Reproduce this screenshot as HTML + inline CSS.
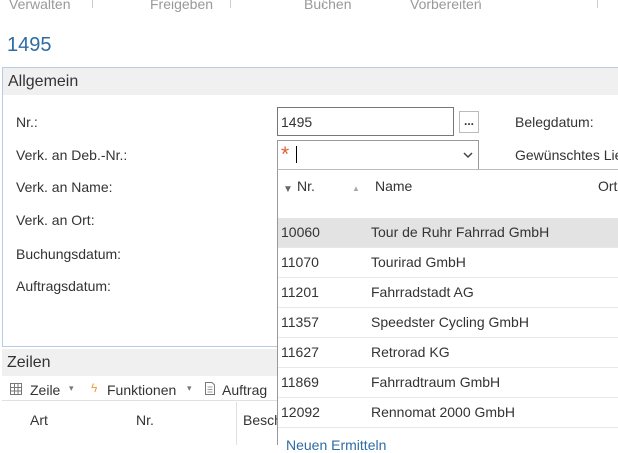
<!DOCTYPE html>
<html><head><meta charset="utf-8"><style>
*{margin:0;padding:0;box-sizing:border-box}
body{width:618px;height:445px;overflow:hidden;background:#fff;font-family:"Liberation Sans",sans-serif;color:#333;position:relative;font-size:14px}
.a{position:absolute;white-space:nowrap}
.tab{color:#999;font-size:14px;top:-4px}
.sep{position:absolute;top:0;width:1px;height:8px;background:#ccc}
.lbl{left:16px;color:#333}
.row{position:absolute;left:278px;width:340px;height:30px;border-bottom:1px solid #e8e8e8}
.row span{position:absolute;top:6px}
</style></head><body>
<div class="a tab" style="left:9px">Verwalten</div>
<div class="sep" style="left:92px"></div>
<div class="a tab" style="left:150px">Freigeben</div>
<div class="sep" style="left:230px"></div>
<div class="a tab" style="left:304px">Buchen</div>
<div class="sep" style="left:323px"></div>
<div class="a tab" style="left:410px">Vorbereiten</div>
<div class="sep" style="left:479px"></div>
<div class="sep" style="left:597px"></div>
<div class="a" style="left:7px;top:34px;font-size:20px;color:#2e6ca4">1495</div>

<div style="position:absolute;left:2px;top:67px;width:640px;height:280px;border:1px solid #b7cde3"></div>
<div style="position:absolute;left:3px;top:68px;width:620px;height:27px;background:#f0f0f0"></div>
<div class="a" style="left:8px;top:73px;font-size:16px;color:#333">Allgemein</div>

<div class="a lbl" style="top:114px">Nr.:</div>
<div class="a lbl" style="top:147px">Verk. an Deb.-Nr.:</div>
<div class="a lbl" style="top:179px">Verk. an Name:</div>
<div class="a lbl" style="top:212px">Verk. an Ort:</div>
<div class="a lbl" style="top:246px">Buchungsdatum:</div>
<div class="a lbl" style="top:278px">Auftragsdatum:</div>

<div style="position:absolute;left:277px;top:107px;width:177px;height:29px;border:1px solid #777"></div>
<div class="a" style="left:281px;top:114px">1495</div>
<div style="position:absolute;left:459px;top:111px;width:20px;height:22px;border:1px solid #bbb;font-size:12px;text-align:center;line-height:18px;font-weight:bold">...</div>
<div class="a" style="left:515px;top:114px">Belegdatum:</div>

<div style="position:absolute;left:277px;top:140px;width:202px;height:30px;border:1px solid #999"></div>
<div class="a" style="left:281px;top:143px;color:#e06030;font-size:21px">*</div>
<div style="position:absolute;left:296px;top:146px;width:1px;height:17px;background:#000"></div>
<svg class="a" style="left:463px;top:151px" width="10" height="8"><path d="M1 2 L5 6 L9 2" stroke="#444" stroke-width="1.5" fill="none"/></svg>
<div class="a" style="left:515px;top:147px">Gewünschtes Lie</div>

<div style="position:absolute;left:2px;top:349px;width:276px;height:27px;background:#f0f0f0"></div>
<div class="a" style="left:7px;top:354px;font-size:16px">Zeilen</div>
<div style="position:absolute;left:2px;top:400px;width:276px;height:1px;background:#e0e0e0"></div>
<svg class="a" style="left:10px;top:383px" width="12" height="12"><rect x=".5" y=".5" width="11" height="11" fill="none" stroke="#777"/><path d="M.5 4.5H11.5M.5 8H11.5M4.5 .5V11.5M8 .5V11.5" stroke="#777"/></svg>
<div class="a" style="left:30px;top:382px">Zeile</div>
<div class="a" style="left:69px;top:383px;font-size:9px;color:#777">▾</div>
<div class="a" style="left:91px;top:381px;color:#f0a040;font-size:12px">ϟ</div>
<div class="a" style="left:107px;top:382px">Funktionen</div>
<div class="a" style="left:187px;top:383px;font-size:9px;color:#777">▾</div>
<svg class="a" style="left:205px;top:382px" width="10" height="13"><path d="M.5 .5H7L9.5 3V12.5H.5Z" fill="none" stroke="#777"/><path d="M2.5 5H7.5M2.5 7.5H7.5M2.5 10H7.5" stroke="#999"/></svg>
<div class="a" style="left:222px;top:382px">Auftrag</div>
<div class="a" style="left:30px;top:412px">Art</div>
<div class="a" style="left:136px;top:412px">Nr.</div>
<div style="position:absolute;left:236px;top:402px;width:1px;height:43px;background:#e0e0e0"></div>
<div class="a" style="left:243px;top:412px">Besch</div>

<div style="position:absolute;left:277px;top:169px;width:341px;height:276px;background:#fff;border-left:1px solid #999;border-top:1px solid #bbb"></div>
<div class="a" style="left:283px;top:184px;font-size:10px;color:#666">▼</div>
<div class="a" style="left:297px;top:178px">Nr.</div>
<div class="a" style="left:352px;top:184px;font-size:8px;color:#aaa">▲</div>
<div class="a" style="left:375px;top:178px">Name</div>
<div class="a" style="left:598px;top:178px">Ort</div>
<div class="row" style="top:218px;background:#e3e3e3"><span style="left:3px">10060</span><span style="left:93px">Tour de Ruhr Fahrrad GmbH</span></div>
<div class="row" style="top:248px"><span style="left:3px">11070</span><span style="left:93px">Tourirad GmbH</span></div>
<div class="row" style="top:278px"><span style="left:3px">11201</span><span style="left:93px">Fahrradstadt AG</span></div>
<div class="row" style="top:308px"><span style="left:3px">11357</span><span style="left:93px">Speedster Cycling GmbH</span></div>
<div class="row" style="top:338px"><span style="left:3px">11627</span><span style="left:93px">Retrorad KG</span></div>
<div class="row" style="top:368px"><span style="left:3px">11869</span><span style="left:93px">Fahrradtraum GmbH</span></div>
<div class="row" style="top:398px"><span style="left:3px">12092</span><span style="left:93px">Rennomat 2000 GmbH</span></div>
<div class="a" style="left:286px;top:437px;color:#2e6ca4">Neuen Ermitteln</div>
</body></html>
